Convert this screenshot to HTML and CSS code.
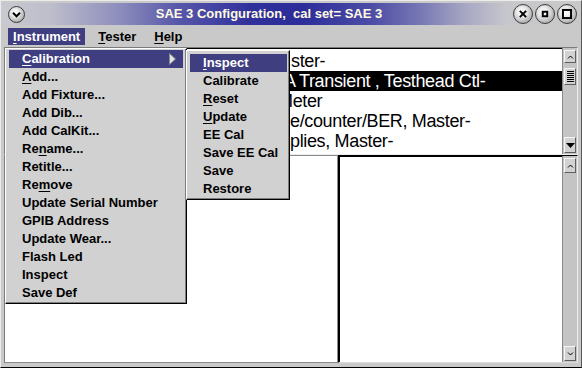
FILE: index.html
```html
<!DOCTYPE html>
<html>
<head>
<meta charset="utf-8">
<title>SAE 3 Configuration</title>
<link rel="stylesheet" href="styles.css">
</head>
<body>
<div class="window">
  <div class="titlebar">
    <span class="tbtn small">
      <svg viewBox="0 0 17 17" width="15" height="15"><path class="glyph" d="M4.5 6.5 L8.5 10.5 L12.5 6.5"/></svg>
    </span>
    <span class="title">SAE 3 Configuration,  cal set= SAE 3</span>
    <span class="tbtns">
      <span class="tbtn"><svg viewBox="0 0 20 20" width="18" height="18"><path class="glyph" d="M6.5 6.5 L13.5 13.5 M13.5 6.5 L6.5 13.5"/></svg></span>
      <span class="tbtn"><svg viewBox="0 0 20 20" width="18" height="18"><rect class="glyph" x="7.5" y="7.5" width="5" height="5"/></svg></span>
      <span class="tbtn"><svg viewBox="0 0 20 20" width="18" height="18"><rect class="glyph" x="5.5" y="5.5" width="9" height="9"/></svg></span>
    </span>
  </div>

  <div class="menubar">
    <span class="mitem active"><u>I</u>nstrument</span>
    <span class="mitem"><u>T</u>ester</span>
    <span class="mitem"><u>H</u>elp</span>
  </div>

  <div class="client">
    <div class="listbox">
      <div class="rows">
        <div class="row r1">ster-</div>
        <div class="row sel r2">A Transient , Testhead Ctl-</div>
        <div class="row r3">Meter</div>
        <div class="row r4">e/counter/BER, Master-</div>
        <div class="row r5">plies, Master-</div>
      </div>
      <div class="vscroll">
        <div class="sbtn"><svg width="7" height="4" viewBox="0 0 7 4"><path class="chev" d="M1 3.5 L3.5 1 L6 3.5"/></svg></div>
        <div class="thumb"><span class="grip"></span></div>
        <div class="track"></div>
        <div class="sbtn down"><svg width="9" height="5" viewBox="0 0 9 5"><path d="M0 0 H9 L4.5 5 Z" fill="#000"/></svg></div>
      </div>
    </div>

    <div class="panes">
      <div class="pane leftpane"></div>
      <div class="pane rightpane">
        <div class="area"></div>
        <div class="vscroll">
          <div class="sbtn tall"><svg width="7" height="4" viewBox="0 0 7 4"><path class="chev" d="M1 3.5 L3.5 1 L6 3.5"/></svg></div>
          <div class="track"></div>
          <div class="sbtn tall"><svg width="7" height="4" viewBox="0 0 7 4"><path class="chev" d="M1 0.5 L3.5 3 L6 0.5"/></svg></div>
        </div>
      </div>
    </div>
  </div>

  <div class="menu dropdown">
    <div class="item hl"><u>C</u>alibration<svg class="arrow" width="7" height="12" viewBox="0 0 7 12"><path d="M0.5 0.5 L6.5 6 L0.5 11.5 Z" fill="#e4e4e4" stroke="#8a8a8a"/></svg></div>
    <div class="item"><u>A</u>dd...</div>
    <div class="item">Add Fixture...</div>
    <div class="item">Add Dib...</div>
    <div class="item">Add CalKit...</div>
    <div class="item">Re<u>n</u>ame...</div>
    <div class="item">Retitle...</div>
    <div class="item">Re<u>m</u>ove</div>
    <div class="item">Update Serial Number</div>
    <div class="item">GPIB Address</div>
    <div class="item">Update Wear...</div>
    <div class="item">Flash Led</div>
    <div class="item">Inspect</div>
    <div class="item">Save Def</div>
  </div>

  <div class="menu submenu">
    <div class="item hl"><u>I</u>nspect</div>
    <div class="item">Calibrate</div>
    <div class="item"><u>R</u>eset</div>
    <div class="item"><u>U</u>pdate</div>
    <div class="item">EE Cal</div>
    <div class="item">Save EE Cal</div>
    <div class="item">Save</div>
    <div class="item">Restore</div>
  </div>
</div>
</body>
</html>
```

FILE: styles.css
```css
* { box-sizing: border-box; margin: 0; padding: 0; }
html, body { width: 582px; height: 368px; overflow: hidden; }
body {
  background: #c9c9c9;
  font-family: "Liberation Sans", Arial, sans-serif;
  color: #000;
}

.window {
  position: relative;
  width: 582px;
  height: 368px;
  display: flex;
  flex-direction: column;
  border-top: 1px solid #ececec;
  border-left: 1px solid #ececec;
  border-right: 1px solid #5a5a5a;
  border-bottom: 1px solid #000;
}

/* title bar */
.titlebar {
  margin-top: 2px;
  height: 22px;
  display: flex;
  align-items: center;
  padding: 0 4px 0 7px;
  background: linear-gradient(to right,
    #c9c9d0 0px, #bdbdcc 50px, #8c8cbc 120px, #5858aa 175px,
    #30309c 250px, #2c2c9a 300px, #4c4ca6 370px, #7878b4 420px,
    #a8a8c4 465px, #c6c6cc 505px, #c9c9c9 582px);
}
.tbtn {
  width: 20px;
  height: 20px;
  border-radius: 50%;
  border: 1px solid #3c3c3c;
  background: radial-gradient(circle at 42% 38%, #ffffff 0%, #ececec 30%, #b4b4b4 70%, #7a7a7a 100%);
  display: flex;
  align-items: center;
  justify-content: center;
  flex: none;
}
.tbtn.small { width: 17px; height: 17px; }
.tbtns { display: flex; gap: 2px; }
.glyph { fill: none; stroke: #000; stroke-width: 2.2; }
.title {
  flex: 1;
  text-align: center;
  white-space: pre;
  font-weight: bold;
  font-size: 13px;
  color: #fffbe2;
  line-height: 22px;
}

/* menu bar */
.menubar {
  height: 21px;
  padding: 3px 0 1px 7px;
  display: flex;
  gap: 8px;
  font-weight: bold;
  font-size: 13px;
}
.mitem {
  padding: 0 5px;
  line-height: 17px;
  height: 17px;
}
.mitem.active { background: #3e3e80; color: #fff; }
u { text-decoration: underline; text-underline-offset: 2px; text-decoration-thickness: 1px; }

/* client area */
.client {
  flex: 1;
  padding: 1px 3px 0 3px;
  display: grid;
  grid-template-rows: 108px 208px;
}

.listbox {
  display: flex;
  background: #fff;
  border: 1px solid;
  border-color: #7c7c7c #ededed #ededed #7c7c7c;
}
.rows {
  flex: 1;
  padding-top: 2px;
  overflow: hidden;
  border-top: 1px solid #000;
  border-left: 1px solid #000;
}
.row {
  height: 20px;
  line-height: 20px;
  font-size: 18px;
  letter-spacing: -0.35px;
  white-space: nowrap;
}
.row.sel { background: #000; color: #fff; }
.r1 { padding-left: 285px; }
.r2 { padding-left: 278px; }
.r3 { padding-left: 272px; }
.r4 { padding-left: 284px; }
.r5 { padding-left: 284px; }

/* scrollbars */
.vscroll {
  width: 15px;
  flex: none;
  display: flex;
  flex-direction: column;
  background: #c4c4c4;
  border-left: 1px solid #8a8a8a;
  padding: 2px 1px 1px 1px;
}
.sbtn {
  height: 13px;
  background: #d2d2d2;
  border: 1px solid;
  border-color: #f6f6f6 #5e5e5e #5e5e5e #f6f6f6;
  display: flex;
  align-items: center;
  justify-content: center;
  flex: none;
}
.sbtn.down { height: 16px; }
.sbtn.tall { height: 15px; }
.chev { fill: none; stroke: #000; stroke-width: 1; }
.thumb {
  margin-top: 5px;
  height: 17px;
  background: #d2d2d2;
  border: 1px solid;
  border-color: #f6f6f6 #5e5e5e #5e5e5e #f6f6f6;
  display: flex;
  align-items: center;
  justify-content: center;
  flex: none;
}
.grip {
  width: 7px;
  height: 11px;
  background: repeating-linear-gradient(to bottom, #000 0px, #000 1px, transparent 1px, transparent 2px);
}
.track { flex: 1; }

.panes {
  display: grid;
  grid-template-columns: 334px 1fr;
}
.pane { background: #fff; }
.leftpane {
  border: 1px solid #8a8a8a;
  border-left-color: #7c7c7c;
}
.rightpane {
  display: flex;
  border: 1px solid;
  border-color: #000 #ededed #dcdcdc #000;
}
.area {
  flex: 1;
  border-top: 1px solid #000;
  border-left: 1px solid #000;
}

/* menus */
.menu {
  position: absolute;
  background: #d1d1d1;
  border: 1px solid;
  border-color: #ffffff #000 #000 #ffffff;
  box-shadow: inset -1px -1px #7d7d7d;
  font-weight: bold;
  font-size: 13px;
}
.dropdown {
  left: 4px;
  top: 47px;
  width: 182px;
  padding: 1px 3px 1px 3px;
}
.submenu {
  left: 185px;
  top: 49px;
  width: 104px;
  padding: 3px 2px 1px 3px;
}
.item {
  height: 18px;
  line-height: 18px;
  padding-left: 13px;
  white-space: nowrap;
  position: relative;
}
.item.hl { background: #3e3e80; color: #fff; }
.arrow { position: absolute; right: 7px; top: 3px; }
```
